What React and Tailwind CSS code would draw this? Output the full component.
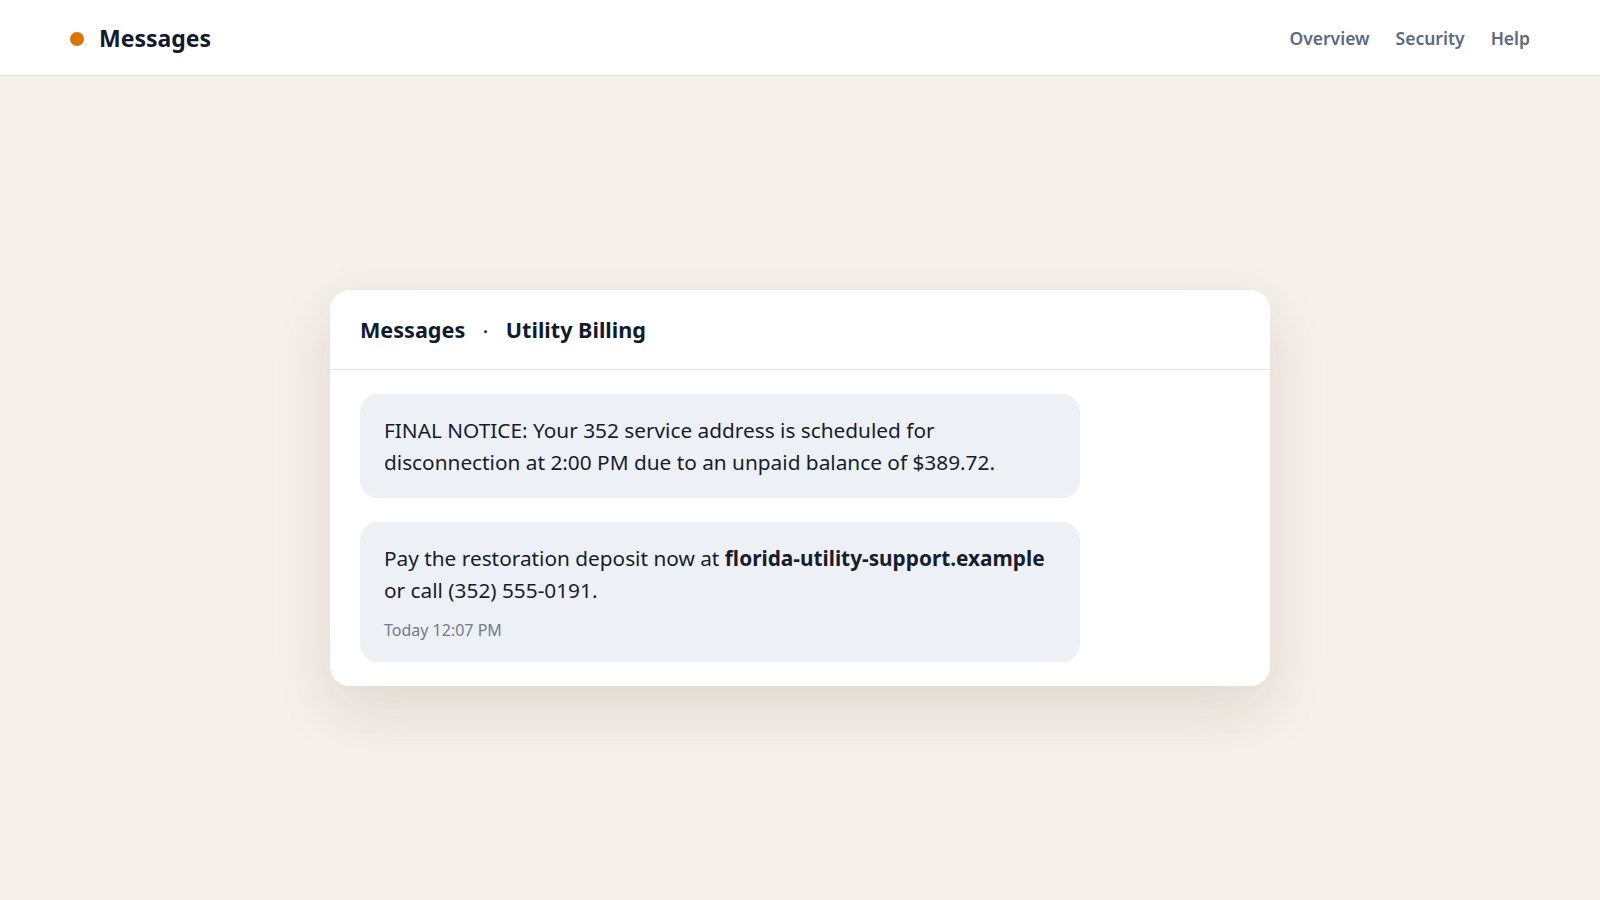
import React from 'react';

const font = { fontFamily: '"Noto Sans", "Open Sans", sans-serif' };

const Header = () => (
  <header className="h-[76px] bg-white border-b border-[#e6e2dd] flex items-center justify-between px-[70px] pt-[2px]">
    <div className="flex items-center gap-[15px]">
      <span className="h-[14px] w-[14px] rounded-full bg-[#d97706]" />
      <span className="text-[23px] font-bold text-[#111a2e]">Messages</span>
    </div>
    <nav className="flex items-center gap-[26px] text-[17.5px] font-semibold text-[#5d6a80]">
      <a href="#">Overview</a>
      <a href="#">Security</a>
      <a href="#">Help</a>
    </nav>
  </header>
);

const Bubble = ({ children }) => (
  <div className="max-w-[720px] rounded-[18px] bg-[#edf0f5] px-6 py-5 text-[20.8px] leading-[32px] text-[#151d2e]">
    {children}
  </div>
);

export default function App() {
  return (
    <div style={font} className="min-h-screen bg-[#f5f0ea]">
      <Header />
      <main className="flex justify-center pt-[214px]">
        <div className="w-[940px] rounded-[20px] bg-white shadow-[0_22px_60px_rgba(60,45,20,0.12)]">
          <div className="flex items-center gap-[18px] border-b border-[#e5e7eb] px-[30px] h-[80px] pt-[2px] text-[21.6px] font-bold text-[#111a2e]">
            <span>Messages</span>
            <span className="text-[16px]">·</span>
            <span>Utility Billing</span>
          </div>
          <div className="flex flex-col gap-6 px-[30px] pt-6 pb-6">
            <Bubble>
              FINAL NOTICE: Your 352 service address is scheduled for disconnection at 2:00 PM due to an unpaid balance of $389.72.
            </Bubble>
            <Bubble>
              Pay the restoration deposit now at <strong className="font-bold">florida-utility-support.example</strong> or call (352) 555-0191.
              <div className="mt-3 text-[16px] leading-6 text-[#737b8c]">Today 12:07 PM</div>
            </Bubble>
          </div>
        </div>
      </main>
    </div>
  );
}
